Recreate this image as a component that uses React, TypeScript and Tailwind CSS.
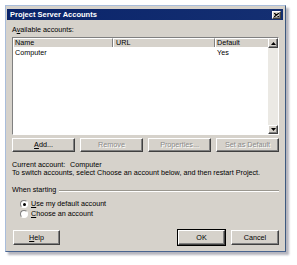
import React from 'react'

const raised =
    'border border-t-white border-l-white border-r-[#404040] border-b-[#404040] shadow-[inset_-1px_-1px_0_#808080] bg-[#d6d2cb]'

function Btn({ children, disabled, def, className = '' }: { children: React.ReactNode; disabled?: boolean; def?: boolean; className?: string }) {
    return (
        <div className={`${def ? 'outline outline-1 outline-black' : ''} ${className}`}>
            <div
                className={`${raised} h-full flex items-center justify-center ${
                    disabled ? 'text-[#8a8a8a] [text-shadow:1px_1px_0_#ffffff]' : 'text-black'
                }`}
            >
                {children}
            </div>
        </div>
    )
}

function Radio({ checked }: { checked?: boolean }) {
    return (
        <div className="w-[8px] h-[8px] rounded-full bg-white border border-t-[#808080] border-l-[#808080] border-r-white border-b-white flex items-center justify-center">
            {checked && <div className="w-[3px] h-[3px] rounded-full bg-black" />}
        </div>
    )
}

export default function App() {
    return (
        <div
            className="w-[297px] h-[265px] bg-white pl-[5px] pt-[5px] text-[7.2px] leading-[8px] text-black"
            style={{ fontFamily: '"Liberation Sans", Arial, sans-serif' }}
        >
            <div className="w-[281px] h-[247px] bg-[#d6d2cb] border border-t-[#a9bddb] border-l-[#a9bddb] border-r-[#3d5a80] border-b-[#4a6590] shadow-[3px_3px_2px_rgba(90,90,110,0.45)] flex flex-col px-[1px] pt-[3px]">
                {/* title bar */}
                <div className="h-[11px] mr-[1px] bg-gradient-to-r from-[#0a246a] to-[#142f72] flex items-center justify-between pl-[3px] pr-[2px]">
                    <span className="text-white font-bold text-[7.5px] leading-[10px]">Project Server Accounts</span>
                    <div className={`${raised} w-[9px] h-[8px] flex items-center justify-center`}>
                        <svg width="5" height="4" viewBox="0 0 5 4">
                            <path d="M0 0 L5 4 M5 0 L0 4" stroke="#000" strokeWidth="1.2" />
                        </svg>
                    </div>
                </div>

                <div className="flex flex-col px-[5px]">
                    <div className="mt-[6px]">
                        A<span className="underline">v</span>ailable accounts:
                    </div>

                    {/* list view */}
                    <div className="mt-[3px] h-[98px] bg-white border border-t-[#808080] border-l-[#808080] border-r-white border-b-white flex">
                        <div className="flex-1 flex flex-col">
                            <div className="h-[9px] flex bg-[#d6d2cb]">
                                <div className="w-[100px] border-r border-r-[#808080] border-t border-t-white border-l border-l-white pl-[1px] leading-[7px]">Name</div>
                                <div className="w-[102px] border-r border-r-[#808080] border-t border-t-white border-l border-l-white pl-[2px] leading-[7px]">URL</div>
                                <div className="flex-1 border-t border-t-white border-l border-l-white pl-[1px] leading-[7px]">Default</div>
                            </div>
                            <div className="flex h-[9px] mt-[2px] text-black">
                                <div className="w-[100px] pl-[2px]">Computer</div>
                                <div className="w-[102px]" />
                                <div className="flex-1 pl-[2px]">Yes</div>
                            </div>
                        </div>
                        <div className="w-[10px] flex flex-col bg-[#ebe9e4]">
                            <div className={`${raised} h-[10px] flex items-center justify-center`}>
                                <svg width="5" height="3" viewBox="0 0 5 3">
                                    <path d="M2.5 0 L5 3 L0 3 Z" fill="#000" />
                                </svg>
                            </div>
                            <div className="flex-1" />
                            <div className={`${raised} h-[9px] flex items-center justify-center`}>
                                <svg width="5" height="3" viewBox="0 0 5 3">
                                    <path d="M0 0 L5 0 L2.5 3 Z" fill="#000" />
                                </svg>
                            </div>
                        </div>
                    </div>

                    <div className="mt-[3px] h-[14px] grid grid-cols-4 gap-[5px]">
                        <Btn>
                            <span className="underline">A</span>dd...
                        </Btn>
                        <Btn disabled>Remove</Btn>
                        <Btn disabled>Properties...</Btn>
                        <Btn disabled>Set as Default</Btn>
                    </div>

                    <div className="mt-[9px] flex">
                        <span className="w-[58px]">Current account:</span>
                        <span>Computer</span>
                    </div>
                    <div className="whitespace-nowrap">To switch accounts, select Choose an account below, and then restart Project.</div>

                    <div className="mt-[9px] flex items-center">
                        <span>When starting</span>
                        <div className="flex-1 ml-[3px] mt-[2px] border-t border-t-[#9a978f] border-b border-b-white" />
                    </div>

                    <div className="mt-[6px] ml-[8px] flex items-center gap-[3px]">
                        <Radio checked />
                        <span>
                            <span className="underline">U</span>se my default account
                        </span>
                    </div>
                    <div className="mt-[2px] ml-[8px] flex items-center gap-[3px]">
                        <Radio />
                        <span>
                            <span className="underline">C</span>hoose an account
                        </span>
                    </div>

                    <div className="mt-[12px] h-[15px] flex">
                        <Btn className="w-[47px] ml-[1px]">
                            <span className="underline">H</span>elp
                        </Btn>
                        <div className="flex-1" />
                        <Btn def className="w-[47px]">
                            OK
                        </Btn>
                        <Btn className="w-[48px] ml-[6px]">Cancel</Btn>
                    </div>
                </div>
            </div>
        </div>
    )
}
